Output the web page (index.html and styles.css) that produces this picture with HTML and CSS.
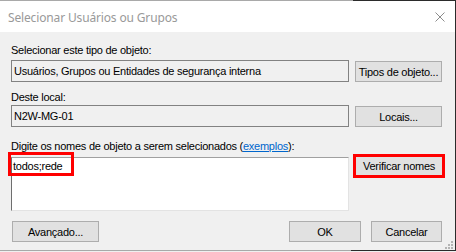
FILE: index.html
```html
<!DOCTYPE html>
<html lang="pt">
<head>
<meta charset="utf-8">
<title>Selecionar Usuários ou Grupos</title>
<link rel="stylesheet" href="styles.css">
</head>
<body>
<div class="window">
  <div class="titlebar">
    <span class="title">Selecionar Usuários ou Grupos</span>
    <svg class="close" width="10" height="10" viewBox="0 0 10 10"><path d="M0.5 0.5 L9.5 9.5 M9.5 0.5 L0.5 9.5" stroke="#8c8c8c" stroke-width="1" fill="none"/></svg>
  </div>
  <div class="content">
    <div class="group g1">
      <div class="label">Selecionar este tipo de objeto:</div>
      <div class="row">
        <div class="field">Usuários, Grupos ou Entidades de segurança interna</div>
        <div class="btn side">Tipos de objeto...</div>
      </div>
    </div>
    <div class="group g2">
      <div class="label">Deste local:</div>
      <div class="row">
        <div class="field">N2W-MG-01</div>
        <div class="btn side">Locais...</div>
      </div>
    </div>
    <div class="group g3">
      <div class="label">Digite os nomes de objeto a serem selecionados (<span class="link">exemplos</span>):</div>
      <div class="row">
        <div class="textarea">
          <span class="entry">todos;rede</span>
          <span class="mark"></span>
        </div>
        <div class="btn side check">Verificar nomes</div>
      </div>
    </div>
    <div class="footer">
      <div class="btn adv">Avançado...</div>
      <div class="spacer"></div>
      <div class="btn ok">OK</div>
      <div class="btn cancel">Cancelar</div>
    </div>
  </div>
  <svg class="grip" width="9" height="9" viewBox="0 0 9 9">
    <rect x="7" y="1" width="2" height="2" fill="#b4b4b4"/>
    <rect x="4" y="4" width="2" height="2" fill="#b4b4b4"/>
    <rect x="7" y="4" width="2" height="2" fill="#b4b4b4"/>
    <rect x="1" y="7" width="2" height="2" fill="#b4b4b4"/>
    <rect x="4" y="7" width="2" height="2" fill="#b4b4b4"/>
    <rect x="7" y="7" width="2" height="2" fill="#b4b4b4"/>
  </svg>
</div>
</body>
</html>
```
FILE: styles.css
```css
html, body {
  margin: 0;
  padding: 0;
  background: #f0f0f0;
}
body {
  width: 456px;
  height: 252px;
  overflow: hidden;
  font-family: "Liberation Sans", Arial, sans-serif;
  font-size: 11px;
  letter-spacing: -0.25px;
  color: #000;
}
.window {
  position: relative;
  box-sizing: content-box;
  width: 455px;
  height: 249px;
  border-top: 1px solid #a9a9a9;
  border-bottom: 1px solid #a9a9a9;
  border-right: 1px solid #2b2b2b;
  background: #f0f0f0;
}
.window::before {
  content: "";
  position: absolute;
  top: -1px;
  left: 353px;
  right: -1px;
  height: 1px;
  background: #2b2b2b;
}
.window::after {
  content: "";
  position: absolute;
  bottom: -1px;
  left: 351px;
  right: -1px;
  height: 1px;
  background: #2b2b2b;
}
.titlebar {
  height: 31px;
  background: #fff;
  display: flex;
  align-items: center;
  justify-content: space-between;
  padding: 0 10px 0 8px;
}
.title {
  font-family: "Noto Sans", "Open Sans", sans-serif;
  font-size: 12px;
  letter-spacing: -0.15px;
  color: #999;
  margin-top: 1px;
}
.close {
  display: block;
}
.content {
  padding: 12px 0 0 11px;
}
.label {
  height: 13px;
  line-height: 13px;
  white-space: nowrap;
}
.link {
  color: #0066cc;
  text-decoration: underline;
}
.row {
  display: flex;
  align-items: flex-start;
  gap: 6px;
}
.g1 .label { margin-bottom: 3px; }
.g2 { margin-top: 9px; }
.g2 .label { margin-bottom: 1px; }
.g3 { margin-top: 13px; }
.g3 .label { margin-bottom: 4px; }
.field {
  box-sizing: border-box;
  width: 338px;
  height: 22px;
  border: 1px solid #828282;
  background: #f0f0f0;
  line-height: 20px;
  padding-left: 2px;
  white-space: nowrap;
}
.btn {
  box-sizing: border-box;
  height: 21px;
  border: 1px solid #adadad;
  background: #e1e1e1;
  display: flex;
  align-items: center;
  justify-content: center;
  white-space: nowrap;
}
.side {
  width: 87px;
  margin-top: 1px;
}
.textarea {
  position: relative;
  box-sizing: border-box;
  width: 338px;
  height: 54px;
  background: #fff;
  border-style: solid;
  border-width: 1px;
  border-color: #a0a0a0 #e3e3e3 #e3e3e3 #6e6e6e;
  padding: 2px 0 0 1px;
  line-height: 13px;
}
.mark {
  position: absolute;
  left: -4px;
  top: -6px;
  width: 66px;
  height: 24px;
  box-sizing: border-box;
  border: 3px solid #ff0000;
}
.check {
  width: 92px;
  height: 24px;
  margin-top: -3px;
  margin-left: -2px;
  border: 3px solid #ff0000;
  padding-bottom: 1px;
}
.footer {
  display: flex;
  margin-top: 10px;
  width: 431px;
}
.adv {
  width: 87px;
  margin-left: 1px;
}
.spacer { flex: 1; }
.ok { width: 72px; margin-right: 10px; }
.cancel { width: 71px; }
.grip {
  position: absolute;
  right: 2px;
  bottom: 1px;
}
```
